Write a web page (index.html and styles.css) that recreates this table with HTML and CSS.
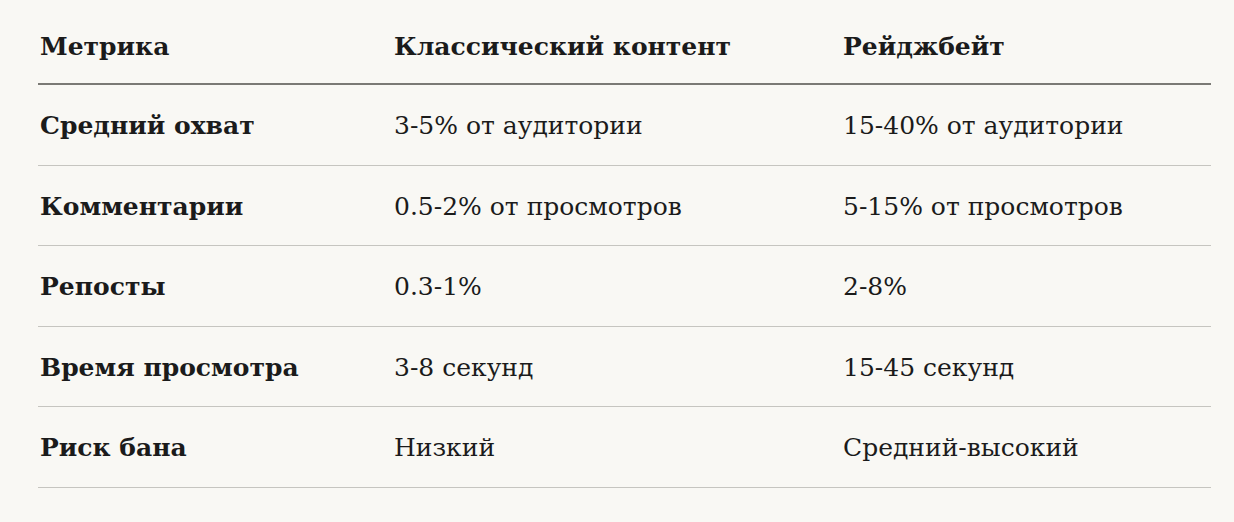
FILE: index.html
```html
<!DOCTYPE html>
<html lang="ru">
<head>
<meta charset="utf-8">
<link rel="stylesheet" href="styles.css">
</head>
<body>
<div class="wrap">
<table class="cmp">
<colgroup><col class="c1"><col class="c2"><col class="c3"></colgroup>
<thead>
<tr><th>Метрика</th><th>Классический контент</th><th>Рейджбейт</th></tr>
</thead>
<tbody>
<tr><td class="m">Средний охват</td><td>3-5% от аудитории</td><td>15-40% от аудитории</td></tr>
<tr><td class="m">Комментарии</td><td>0.5-2% от просмотров</td><td>5-15% от просмотров</td></tr>
<tr><td class="m">Репосты</td><td>0.3-1%</td><td>2-8%</td></tr>
<tr><td class="m">Время просмотра</td><td>3-8 секунд</td><td>15-45 секунд</td></tr>
<tr><td class="m">Риск бана</td><td>Низкий</td><td>Средний-высокий</td></tr>
</tbody>
</table>
</div>
</body>
</html>
```
FILE: styles.css
```css
html, body { margin: 0; background: #f9f8f4; }
body { padding: 8px 23px 0 38px; font-family: "DejaVu Serif", "Liberation Serif", serif; color: #1b1b1b; }
.wrap { width: 1173px; }
.cmp { width: 100%; border-collapse: collapse; table-layout: fixed; font-size: 25px; }
.c1 { width: 354px; }
.c2 { width: 449px; }
.c3 { width: 370px; }
th, td { text-align: left; padding: 2px 0 0 2px; vertical-align: middle; }
th { height: 73px; font-weight: bold; border-bottom: 2px solid #7b7a75; }
td { height: 77.5px; border-bottom: 1px solid #c6c5c0; }
td.m { font-weight: bold; }
```
